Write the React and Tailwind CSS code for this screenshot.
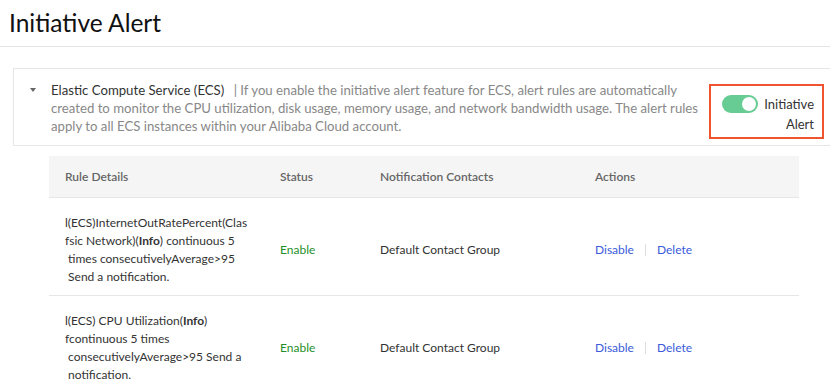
import React from "react";

const rows = [
  {
    lines: [
      <>l(ECS)InternetOutRatePercent(Clas</>,
      <>
        fsic Network)(<b className="font-bold">Info</b>) continuous 5
      </>,
      <>{" times consecutivelyAverage>95"}</>,
      <>{" Send a notification."}</>,
    ],
  },
  {
    lines: [
      <>
        l(ECS) CPU Utilization(<b className="font-bold">Info</b>)
      </>,
      <>fcontinuous 5 times</>,
      <>{" consecutivelyAverage>95 Send a"}</>,
      <>{" notification."}</>,
    ],
  },
];

const Toggle = () => (
  <div className="relative w-[36px] h-[18px] rounded-full bg-[#66cc93] shrink-0">
    <div className="absolute right-[2px] top-[2px] w-[14px] h-[14px] rounded-full bg-white" />
  </div>
);

export default function App() {
  return (
    <div
      className="w-[830px] h-[386px] overflow-hidden bg-white text-[13px] text-[#333]"
      style={{ fontFamily: 'Lato, "Liberation Sans", Arial, sans-serif' }}
    >
      {/* Header */}
      <div className="h-[47px] border-b border-[#e5e5e5] pl-[9px] flex items-center">
        <h1 className="text-[24.5px] leading-none text-[#111]">Initiative Alert</h1>
      </div>

      {/* Service card */}
      <div className="ml-[13px] mt-[21px] w-[830px] border border-[#e6e6e6] flex pl-[16px] pt-[12px] pb-[6px]">
        <div className="w-[8px] pt-[7px] mr-[13px]">
          <div className="w-0 h-0 border-l-[3.5px] border-r-[3.5px] border-t-[4px] border-l-transparent border-r-transparent border-t-[#666]" />
        </div>
        <p className="w-[652px] leading-[18px] text-[#888] text-[13.2px]">
          <span className="text-[#333] mr-[6px]">Elastic Compute Service (ECS)</span>
          {" | If you enable the initiative alert feature for ECS, alert rules are automatically created to monitor the CPU utilization, disk usage, memory usage, and network bandwidth usage. The alert rules apply to all ECS instances within your Alibaba Cloud account."}
        </p>
        <div className="ml-[6px] mt-[3px] w-[115px] h-[55px] border-2 border-[#f0532f] flex justify-between pl-[11px] pr-[8px] pt-[9px]">
          <Toggle />
          <div className="text-right leading-[20px] text-[#333] -mt-[1px]">
            Initiative
            <br />
            Alert
          </div>
        </div>
      </div>

      {/* Table */}
      <div className="ml-[49px] mt-[10px] w-[750px] text-[12px]">
        <div className="grid grid-cols-[215px_100px_215px_220px] h-[42px] items-center bg-[#f5f5f5] border-b border-[#e6e6e6] text-[#666] font-semibold">
          <div className="pl-[16px]">Rule Details</div>
          <div className="pl-[16px]">Status</div>
          <div className="pl-[16px]">Notification Contacts</div>
          <div className="pl-[16px]">Actions</div>
        </div>
        {rows.map((r, i) => (
          <div
            key={i}
            className="grid grid-cols-[215px_100px_215px_220px] items-center border-b border-[#e6e6e6] pt-[16px] pb-[9px]"
          >
            <div className="pl-[16px] leading-[18px]">
              {r.lines.map((l, j) => (
                <div key={j} className="whitespace-pre">
                  {l}
                </div>
              ))}
            </div>
            <div className="pl-[16px] text-[#1f8f2a]">Enable</div>
            <div className="pl-[16px]">Default Contact Group</div>
            <div className="pl-[16px] flex items-center text-[#3a5bd9]">
              <span>Disable</span>
              <span className="mx-[11px] w-px h-[12px] bg-[#ddd]" />
              <span>Delete</span>
            </div>
          </div>
        ))}
      </div>
    </div>
  );
}
